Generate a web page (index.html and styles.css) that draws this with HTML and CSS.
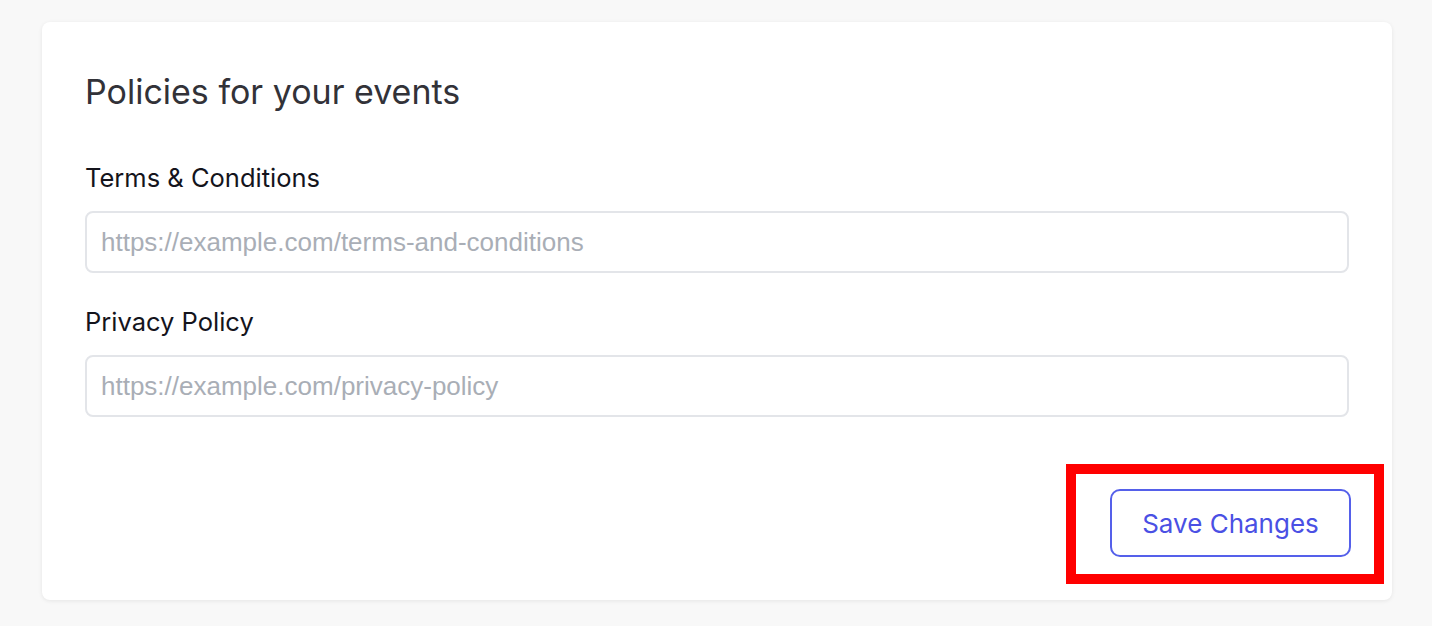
FILE: index.html
```html
<!DOCTYPE html>
<html lang="en">
<head>
<meta charset="utf-8">
<title>Policies</title>
<link rel="stylesheet" href="styles.css">
</head>
<body>
<main class="card">
  <h2 class="card-title">Policies for your events</h2>
  <div class="field">
    <label class="field-label" for="terms">Terms &amp; Conditions</label>
    <input class="field-input" id="terms" type="text" placeholder="https://example.com/terms-and-conditions">
  </div>
  <div class="field">
    <label class="field-label" for="privacy">Privacy Policy</label>
    <input class="field-input" id="privacy" type="text" placeholder="https://example.com/privacy-policy">
  </div>
  <div class="actions">
    <div class="highlight">
      <button class="btn-outline" type="button">Save Changes</button>
    </div>
  </div>
</main>
</body>
</html>
```
FILE: styles.css
```css
* { box-sizing: border-box; }
html, body { margin: 0; }
body {
  background: #f8f8f8;
  padding: 22px 40px 26px 42px;
  font-family: Inter, "Noto Sans", sans-serif;
}
.card {
  background: #fff;
  border-radius: 8px;
  box-shadow: 0 1px 4px rgba(0, 0, 0, 0.08);
  padding: 50px 43px 43px 43px;
}
.card-title {
  margin: 0 0 50px;
  font-size: 34px;
  line-height: 40px;
  font-weight: 400;
  color: #323238;
}
.field { margin-bottom: 33px; }
.field-label {
  display: block;
  font-size: 25.5px;
  line-height: 32px;
  color: #14141c;
  margin-bottom: 17px;
}
.field-input {
  display: block;
  width: 100%;
  height: 62px;
  border: 2px solid #e3e5e9;
  border-radius: 8px;
  padding: 0 14px;
  font-family: "Liberation Sans", Arial, sans-serif;
  font-size: 26px;
  color: #333;
  outline: none;
}
.field-input::placeholder { color: #a9aeb6; }
.actions {
  display: flex;
  justify-content: flex-end;
  margin-top: 72px;
  margin-right: -2px;
}
.highlight { position: relative; }
.highlight::after {
  content: "";
  position: absolute;
  left: -44px;
  top: -25px;
  right: -33px;
  bottom: -27px;
  border: 10px solid #ff0000;
  pointer-events: none;
}
.btn-outline {
  display: block;
  width: 241px;
  height: 68px;
  border: 2px solid #5560ea;
  border-radius: 10px;
  background: #fff;
  color: #4a50e4;
  font-family: Inter, "Noto Sans", sans-serif;
  font-size: 26px;
  cursor: pointer;
}
```
